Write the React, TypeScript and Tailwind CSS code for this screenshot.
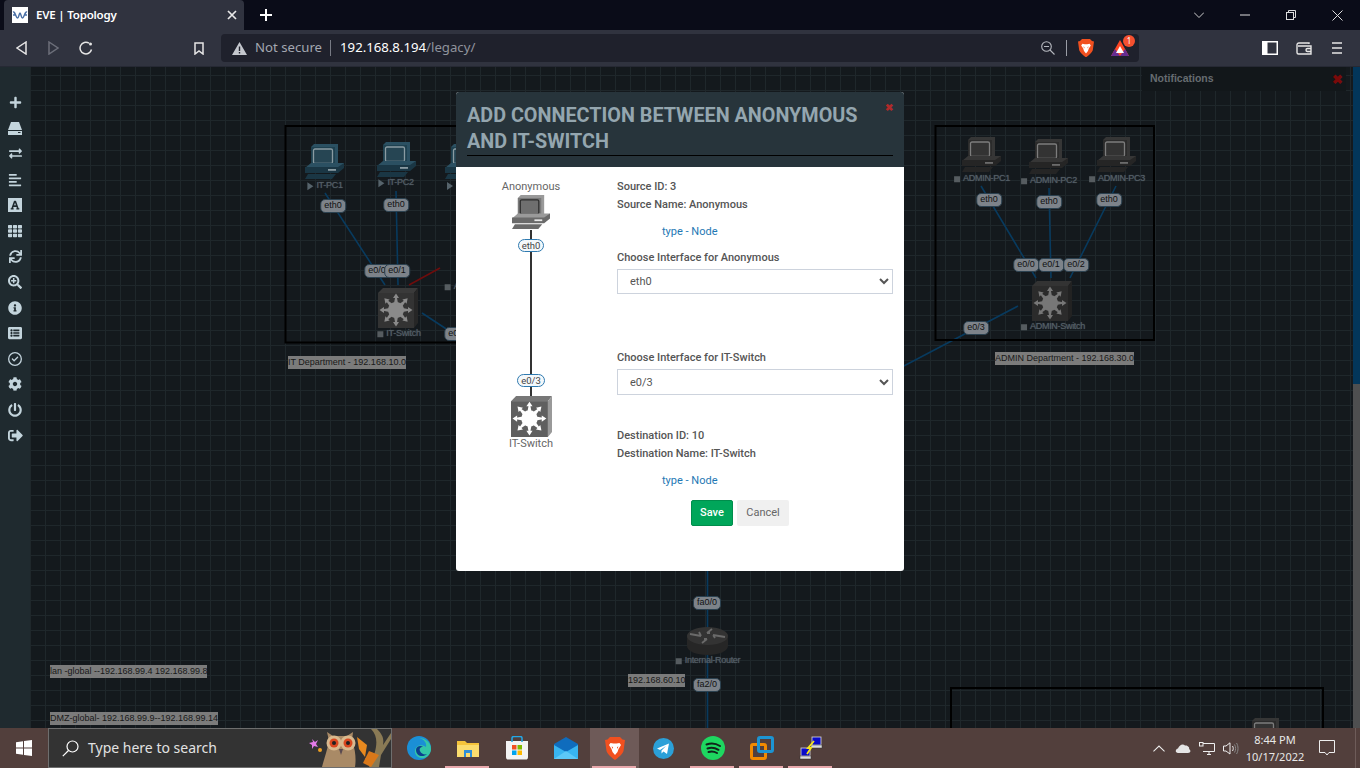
import React from "react";
import {
  FaPlus, FaExchangeAlt, FaAlignLeft, FaFont, FaTh, FaSync, FaSearchPlus, FaInfoCircle, FaListAlt, FaCog, FaPowerOff, FaSignOutAlt,
} from "react-icons/fa";
import { FaRegCircleCheck } from "react-icons/fa6";

const OX = 30, OY = 67;

function Pc({ w = 40, body = "#1f4150", top = "#2b5062", front = "#1a3644", screen = "#264553", rim = "#8a9ba2", slot = "#8a9ba2" }: { w?: number; body?: string; top?: string; front?: string; screen?: string; rim?: string; slot?: string }) {
  return (
    <svg width={w} height={w * 0.9} viewBox="0 0 40 36">
      <path d="M6 3 L9 0 H33 V20 L30 24 H6 Z" fill={top} />
      <rect x="6" y="3" width="24" height="21" fill={body} />
      <rect x="8.5" y="5" width="19" height="14.5" rx="1.5" fill={screen} stroke={rim} strokeWidth="1.3" />
      <path d="M0 24 L6 19 H39 V20 L33 24 Z" fill={top} />
      <path d="M0 23 H33 L39 19 V24 L33 29 H0 Z" fill={front} />
      <rect x="23" y="25" width="8" height="1.8" fill={slot} />
      <path d="M3 30 H31 L27 35 H0 Z" fill={front} />
    </svg>
  );
}

function Sw({ w = 40, top = "#3a3a3a", side = "#262626", face = "#333", star = "#8a8a8a" }: { w?: number; top?: string; side?: string; face?: string; star?: string }) {
  const rays = [0, 45, 90, 135, 180, 225, 270, 315];
  return (
    <svg width={w} height={w} viewBox="0 0 40 40">
      <path d="M0 5 L5 0 H40 L36 5 Z" fill={top} />
      <path d="M36 5 L40 0 V35 L36 40 Z" fill={side} />
      <rect x="0" y="5" width="36" height="35" fill={face} />
      {rays.map((r) => (
        <g key={r} transform={`rotate(${r} 18 22)`}>
          <path d="M15.5 18 L17.2 9 H18.8 L20.5 18 Z" fill={star} />
          <path d="M18 5.5 L21 10 H15 Z" fill={star} />
        </g>
      ))}
      <circle cx="18" cy="22" r="8" fill={star} />
    </svg>
  );
}

function Router() {
  return (
    <svg width="41" height="28" viewBox="0 0 41 28">
      <path d="M0 8 V19 C0 24 9 28 20.5 28 C32 28 41 24 41 19 V8 Z" fill="#262626" />
      <ellipse cx="20.5" cy="9" rx="20.5" ry="9" fill="#333" />
      <path d="M3 7 L14 9 M12 5 L14 9 M38 10 L26 8 M28 11 L26 8 M25 2 L20 6 M23 6 L20 6 M15 16 L20 12 M17 12 L20 12" stroke="#6a6a6a" strokeWidth="1.8" fill="none" />
    </svg>
  );
}

const pills: [string, number, number][] = [
  ["eth0", 333, 206], ["eth0", 396, 205], ["e0/0", 377, 271], ["e0/1", 397, 271], ["e0/3", 457, 334],
  ["eth0", 989, 200], ["eth0", 1049, 202], ["eth0", 1109, 200], ["e0/0", 1026, 265], ["e0/1", 1051, 265], ["e0/2", 1076, 265], ["e0/3", 976, 328],
  ["fa0/0", 707, 603], ["fa2/0", 707, 685],
];

const labels: [string, number, number, number][] = [
  ["IT Department - 192.168.10.0", 288, 356, 118],
  ["ADMIN Department - 192.168.30.0", 995, 352, 139],
  ["192.168.60.10", 628, 674, 57],
  ["lan -global --192.168.99.4 192.168.99.8", 50, 665, 157],
  ["DMZ-global- 192.168.99.9--192.168.99.14", 50, 712, 168],
];

const nodeNames: [string, number, number, boolean][] = [
  ["IT-PC1", 325, 186, true], ["IT-PC2", 396, 183, true], ["", 450, 186, true],
  ["IT-Switch", 399, 334, false], ["A", 452, 287, false],
  ["ADMIN-PC1", 982, 179, false], ["ADMIN-PC2", 1049, 181, false], ["ADMIN-PC3", 1117, 179, false],
  ["ADMIN-Switch", 1053, 327, false], ["Internal-Router", 708, 661, false],
];

const pcsBlue: [number, number][] = [[305, 144], [377, 142], [445, 144]];
const pcsGrey: [number, number][] = [[962, 137], [1029, 139], [1097, 137], [1246, 718]];

function Canvas() {
  return (
    <div className="relative flex-1 overflow-hidden bg-[#14191d] bg-[linear-gradient(#1f272b_1px,transparent_1px),linear-gradient(90deg,#1f272b_1px,transparent_1px)] bg-[size:15px_15px] bg-[position:0px_8px]">
      <svg className="absolute left-0 top-0" width="1330" height="661" viewBox="30 67 1330 661">
        <g stroke="#083a5e" strokeWidth="1.6" fill="none">
          <path d="M325 193 L385 285 M396 191 L398 285 M422 313 L460 338" />
          <path d="M981 186 L1036 278 M1049 188 L1051 278 M1116 186 L1070 278 M1018 306 L900 368" />
          <path d="M707.5 560 V730" />
        </g>
        <path d="M409 285 L440 268" stroke="#6e0c0c" strokeWidth="1.6" />
        <g fill="none" stroke="#000" strokeWidth="2">
          <rect x="285.5" y="126" width="300" height="216.5" />
          <rect x="935.5" y="126" width="218.5" height="214" />
          <rect x="951" y="688" width="372" height="80" />
        </g>
      </svg>
      {pcsBlue.map(([x, y]) => (
        <div key={x} className="absolute" style={{ left: x - OX, top: y - OY }}><Pc /></div>
      ))}
      {pcsGrey.map(([x, y]) => (
        <div key={x} className="absolute" style={{ left: x - OX, top: y - OY }}>
          <Pc body="#2b2b2b" top="#363636" front="#252525" screen="#333" rim="#7d7d7d" slot="#6b6b6b" />
        </div>
      ))}
      <div className="absolute" style={{ left: 378 - OX, top: 288 - OY }}><Sw /></div>
      <div className="absolute" style={{ left: 1032 - OX, top: 281 - OY }}><Sw top="#333" side="#222" face="#2b2b2b" star="#777" /></div>
      <div className="absolute" style={{ left: 687 - OX, top: 627 - OY }}><Router /></div>
      {nodeNames.map(([t, x, y, run]) => (
        <div key={t + x} className="absolute flex -translate-x-1/2 -translate-y-1/2 items-center gap-[3px] whitespace-nowrap text-[9px] tracking-[-0.3px] text-[#525d65] [font-family:'Liberation_Sans',sans-serif] [text-shadow:0_0_1px_#525d65]" style={{ left: x - OX, top: y - OY }}>
          {run ? (
            <span className="h-0 w-0 border-y-[4px] border-l-[6px] border-y-transparent border-l-[#56636b]" />
          ) : (
            <span className="h-[6px] w-[6px] bg-[#565c60]" />
          )}
          {t}
        </div>
      ))}
      {pills.map(([t, x, y]) => (
        <div key={t + x} className="absolute flex h-[14px] -translate-x-1/2 -translate-y-1/2 items-center rounded-[5px] border border-[#2b4150] bg-[#7d838a] px-[3px] text-[9px] text-[#111] [font-family:'Liberation_Sans',sans-serif]" style={{ left: x - OX, top: y - OY }}>
          {t}
        </div>
      ))}
      {labels.map(([t, x, y, w]) => (
        <div key={t} className="absolute h-[13px] overflow-hidden whitespace-nowrap bg-[#7b7b7b] text-[9px] leading-[13px] text-[#181818] [font-family:'Liberation_Sans',sans-serif]" style={{ left: x - OX, top: y - OY, width: w }}>
          {t}
        </div>
      ))}
      <div className="absolute right-[14px] top-0 flex h-[24px] w-[204px] items-center justify-between bg-[#12171a] pl-2 pr-[3px] text-[10.5px] font-bold text-[#666c70] [font-family:'Liberation_Sans',sans-serif]">
        <span>Notifications</span>
        <span className="text-[13px] leading-none text-[#7a0a0a]">✖</span>
      </div>
      <div className="absolute right-0 top-0 flex h-full w-[7px] flex-col">
        <div className="h-[317px] bg-[#03365a]" />
        <div className="flex-1 bg-[#4e4f50]" />
      </div>
    </div>
  );
}

function Pill({ t }: { t: string }) {
  return <div className="flex h-[13px] items-center rounded-full border border-[#2f7ab0] bg-[#f4f8fb] px-[3px] text-[9.5px] leading-none text-[#444]">{t}</div>;
}

function Modal() {
  return (
    <div className="absolute left-[456px] top-[25px] flex h-[479px] w-[448px] flex-col overflow-hidden rounded-[3px] bg-white text-[#555] [font-family:Roboto,'Noto_Sans',sans-serif]">
      <div className="relative h-[75px] bg-[#27343b] px-[11px] pt-[11px]">
        <div className="h-[53px] border-b border-black pb-[1px] text-[19.8px] font-bold leading-[26px] text-[#94a6af]">
          ADD CONNECTION BETWEEN ANONYMOUS
          <br />
          AND IT-SWITCH
        </div>
        <span className="absolute right-[11px] top-[11px] text-[10px] font-bold leading-none text-[#b02a2a]">✖</span>
      </div>
      <div className="flex flex-1">
        <div className="flex h-[285px] w-[150px] flex-col items-center pt-[13px] text-[11px]">
          <div className="leading-[14px] text-[#666]">Anonymous</div>
          <div className="mt-[1px] leading-none">
            <Pc w={39} body="#7a7a7a" top="#9a9a9a" front="#6a6a6a" screen="#6f6f6f" rim="#2f2f2f" slot="#e8e8e8" />
          </div>
          <div className="h-[9px] w-[2px] bg-[#333]" />
          <Pill t="eth0" />
          <div className="h-[122px] w-[2px] bg-[#333]" />
          <Pill t="e0/3" />
          <div className="h-[9px] w-[2px] bg-[#333]" />
          <Sw w={41} top="#777" side="#999" face="#5f5f5f" star="#fff" />
          <div className="text-[11px] leading-[14px] text-[#666]">IT-Switch</div>
        </div>
        <div className="ml-[11px] w-[276px] pt-[12px] text-[11px] font-medium leading-[16px] text-[#555]">
          <div>Source ID: 3</div>
          <div className="mt-[2px]">Source Name: Anonymous</div>
          <div className="ml-[45px] mt-[11px] font-normal text-[#1f78b4]">type - Node</div>
          <div className="mt-[10px]">Choose Interface for Anonymous</div>
          <select defaultValue="eth0" className="mt-[3px] block h-[25px] w-full rounded-none border border-[#cdd3dd] bg-white pl-[8px] text-[11px] font-normal text-[#555]">
            <option>eth0</option>
          </select>
          <div className="mt-[56px]">Choose Interface for IT-Switch</div>
          <select defaultValue="e0/3" className="mt-[3px] block h-[26px] w-full rounded-none border border-[#cdd3dd] bg-white pl-[8px] text-[11px] font-normal text-[#555]">
            <option>e0/3</option>
          </select>
          <div className="mt-[33px]">Destination ID: 10</div>
          <div className="mt-[2px]">Destination Name: IT-Switch</div>
          <div className="ml-[45px] mt-[11px] font-normal text-[#1f78b4]">type - Node</div>
          <div className="ml-[74px] mt-[11px] flex gap-[4px]">
            <div className="flex h-[26px] w-[42px] items-center justify-center rounded-[2px] border border-[#008d4c] bg-[#00a65a] text-white">Save</div>
            <div className="flex h-[26px] w-[52px] items-center justify-center rounded-[2px] bg-[#f0f0f0] font-normal text-[#666]">Cancel</div>
          </div>
        </div>
      </div>
    </div>
  );
}

function BraveLogo({ s = 20 }: { s?: number }) {
  return (
    <svg width={s} height={s * 1.15} viewBox="0 0 20 23">
      <path d="M5 0 H15 L17.5 2.5 L20 3 L18.5 14 C17.5 17 13 21 10 23 C7 21 2.5 17 1.5 14 L0 3 L2.5 2.5 Z" fill="#f1501f" />
      <path d="M5.5 6 L8.5 6.5 H11.5 L14.5 6 L16 8 L13.5 12 L12.5 15 L10 18 L7.5 15 L6.5 12 L4 8 Z M8 10 L6.5 9.5 L8 12 Z M12 10 L13.5 9.5 L12 12 Z" fill="#fff" fillRule="evenodd" />
    </svg>
  );
}

function Chrome() {
  return (
    <>
      <div className="flex h-[30px] items-end bg-[#0a0c18] text-white [font-family:'Noto_Sans',sans-serif]">
        <div className="ml-[4px] flex h-[30px] w-[240px] items-center rounded-t-[4px] bg-[#30333f] pl-[8px]">
          <div className="flex h-[16px] w-[16px] items-center justify-center bg-white">
            <svg width="16" height="10" viewBox="0 0 16 10" fill="none" stroke="#4a6fa5" strokeWidth="1.5"><path d="M1 2 C3 1 4 8 5.5 8 C7 8 7 3 8 3 C9 3 9 8 10.5 8 C12 8 13 1 15 2 M1 5 H4 M12 5 H15" /></svg>
          </div>
          <span className="ml-[8px] text-[11.5px] font-semibold leading-none tracking-[-0.2px]">EVE | Topology</span>
          <svg className="ml-auto mr-[7px]" width="10" height="10" viewBox="0 0 10 10" stroke="#e8e8e8" strokeWidth="1.7"><path d="M1 1 L9 9 M9 1 L1 9" /></svg>
        </div>
        <div className="ml-[16px] flex h-[30px] items-center">
          <svg width="12" height="12" viewBox="0 0 12 12" stroke="#fff" strokeWidth="2"><path d="M6 0 V12 M0 6 H12" /></svg>
        </div>
        <div className="ml-auto flex h-[30px] items-center">
          <svg className="mr-[36px]" width="10" height="6" viewBox="0 0 10 6" fill="none" stroke="#ccc"><path d="M0 0.5 L5 5.5 L10 0.5" /></svg>
          <svg className="mr-[36px]" width="10" height="2" viewBox="0 0 10 2"><path d="M0 1 H10" stroke="#ddd" /></svg>
          <svg className="mr-[36px]" width="10" height="10" viewBox="0 0 10 10" fill="none" stroke="#ddd"><rect x="0.5" y="2.5" width="7" height="7" /><path d="M2.5 2.5 V0.5 H9.5 V7.5 H7.5" /></svg>
          <svg className="mr-[17px]" width="11" height="11" viewBox="0 0 11 11" stroke="#ddd"><path d="M0.5 0.5 L10.5 10.5 M10.5 0.5 L0.5 10.5" /></svg>
        </div>
      </div>
      <div className="flex h-[37px] items-center border-b border-[#262934] bg-[#30333f] [font-family:'Noto_Sans',sans-serif]">
        <svg className="ml-[16px]" width="11" height="14" viewBox="0 0 11 14" fill="none" stroke="#e6e6e6" strokeWidth="1.5"><path d="M10 1 L1 7 L10 13 Z" /></svg>
        <svg className="ml-[21px]" width="11" height="14" viewBox="0 0 11 14" fill="none" stroke="#6c6f7a" strokeWidth="1.5"><path d="M1 1 L10 7 L1 13 Z" /></svg>
        <svg className="ml-[20px]" width="14" height="14" viewBox="0 0 14 14" fill="none" stroke="#e6e6e6" strokeWidth="1.5"><path d="M12.5 8.5 A5.8 5.8 0 1 1 10 2.2" /><circle cx="11.5" cy="3" r="1.5" fill="#e6e6e6" stroke="none" /></svg>
        <svg className="ml-[101px]" width="10" height="13" viewBox="0 0 10 13" fill="none" stroke="#e6e6e6" strokeWidth="1.5"><path d="M1 1 H9 V12 L5 9 L1 12 Z" /></svg>
        <div className="ml-[17px] flex h-[28px] w-[918px] items-center rounded-[4px] bg-[#1f212c] pl-[11px]">
          <svg width="15" height="13" viewBox="0 0 15 13"><path fillRule="evenodd" d="M7.5 0 L15 13 H0 Z M6.8 4.5 H8.2 V9 H6.8 Z M6.8 10 H8.2 V11.4 H6.8 Z" fill="#c4c7cd" /></svg>
          <span className="ml-[8px] text-[13.2px] leading-none text-[#a3a7b0]">Not secure</span>
          <span className="ml-[8px] h-[16px] w-px bg-[#777a84]" />
          <span className="ml-[9px] text-[13.2px] leading-none text-white">192.168.8.194<span className="text-[#8f939c]">/legacy/</span></span>
          <svg className="ml-auto" width="14" height="14" viewBox="0 0 14 14" fill="none" stroke="#b5b8bf" strokeWidth="1.1"><circle cx="5.5" cy="5.5" r="4.8" /><path d="M3 5.5 H8 M9 9 L13.5 13.5" /></svg>
          <span className="ml-[11px] h-[16px] w-px bg-[#9a9da6]" />
          <span className="ml-[11px]"><BraveLogo s={16} /></span>
          <div className="relative ml-[17px] mr-[10px] h-[16px] w-[18px]">
            <svg width="18" height="16" viewBox="0 0 18 16"><path d="M9 0 L18 16 H0 Z" fill="#ff4724" /><path d="M0 16 L4 9 L9 16 L14 9 L18 16 Z" fill="#662d91" /><path d="M9 6 L13 13 H5 Z" fill="#fff" /></svg>
            <span className="absolute -right-[6px] -top-[5px] flex h-[12px] w-[12px] items-center justify-center rounded-full bg-[#f5502f] text-[8px] leading-none text-white">1</span>
          </div>
        </div>
        <svg className="ml-[123px]" width="16" height="14" viewBox="0 0 16 14"><rect x="0.75" y="0.75" width="14.5" height="12.5" fill="none" stroke="#fff" strokeWidth="1.5" /><rect x="1" y="1" width="4.5" height="12" fill="#fff" /></svg>
        <svg className="ml-[18px]" width="16" height="13" viewBox="0 0 16 13" fill="none" stroke="#e6e6e6" strokeWidth="1.4"><path d="M13 2 V1 H3 C1.5 1 1 2 1 3 V10.5 C1 11.5 1.7 12 2.5 12 H15 V4 H2" /><path d="M15 6.5 H11.5 A1.5 1.5 0 0 0 11.5 9.5 H15" /></svg>
        <svg className="ml-[20px]" width="10" height="12" viewBox="0 0 10 12" stroke="#e6e6e6" strokeWidth="1.6"><path d="M0 1 H10 M0 6 H10 M0 11 H10" /></svg>
      </div>
    </>
  );
}

const sideIcons = [
  <FaPlus key="a" size={13} />,
  <svg key="b" width="14" height="13" viewBox="0 0 14 13"><path d="M3 0 H11 L14 8 V13 H0 V8 Z" fill="#c3d4dc" /><path d="M0 8.5 H14" stroke="#1f2a2f" /><rect x="10" y="10" width="2.5" height="1" fill="#1f2a2f" /></svg>,
  <FaExchangeAlt key="c" size={13} />,
  <FaAlignLeft key="d" size={14} />,
  <span key="e" className="flex h-[14px] w-[14px] items-center justify-center bg-[#c3d4dc] text-[#1f2a2f]"><FaFont size={10} /></span>,
  <FaTh key="f" size={14} />,
  <FaSync key="g" size={13} />,
  <FaSearchPlus key="h" size={14} />,
  <FaInfoCircle key="i" size={14} />,
  <FaListAlt key="j" size={14} />,
  <FaRegCircleCheck key="k" size={14} />,
  <FaCog key="l" size={14} />,
  <FaPowerOff key="m" size={14} />,
  <FaSignOutAlt key="n" size={15} />,
];

function Sidebar() {
  return (
    <div className="flex w-[30px] flex-col items-center bg-[#1f2a2f] pt-[23px] text-[#c3d4dc]">
      {sideIcons.map((ic, i) => (
        <div key={i} className="flex h-[25.6px] items-center justify-center">{ic}</div>
      ))}
    </div>
  );
}

function Owl() {
  return (
    <svg width="82" height="38" viewBox="0 0 82 38">
      <path d="M3 10 L6 13 L9 11 L7 15 L9 18 L5 17 L3 20 L3 16 L0 14 L4 13 Z" fill="#e47be8" />
      <circle cx="11" cy="21" r="2" fill="#f0a020" />
      <circle cx="58" cy="31" r="2" fill="#d9c0ee" />
      <path d="M60 38 C66 25 72 10 62 0 H68 C74 6 75 10 74 16 L82 4 V10 L72 26 L70 38 Z" fill="#8a7a55" />
      <path d="M48 8 L58 16 L56 28 L50 20 Z" fill="#e8891f" />
      <path d="M60 22 L70 26 L62 38 L54 34 Z" fill="#d9781a" />
      <path d="M20 12 L18 3 L24 7 H38 L44 3 L43 12 C47 22 47 32 46 38 H13 C15 30 18 22 20 12 Z" fill="#a98a66" />
      <circle cx="25" cy="14" r="7.5" fill="#d9b98e" />
      <circle cx="39" cy="14" r="7.5" fill="#d9b98e" />
      <circle cx="25" cy="14" r="4.5" fill="#d9481f" />
      <circle cx="39" cy="14" r="4.5" fill="#d9481f" />
      <circle cx="25" cy="14" r="2" fill="#222" />
      <circle cx="39" cy="14" r="2" fill="#222" />
      <path d="M30 20 L34 20 L32 26 Z" fill="#5a4a50" />
    </svg>
  );
}

function TaskIcon({ children, active, mark }: { children: React.ReactNode; active?: boolean; mark?: boolean }) {
  return (
    <div className={`relative flex h-10 w-[49px] items-center justify-center ${active ? "bg-[#6e5a58]" : ""}`}>
      {children}
      {mark ? <span className="absolute bottom-0 left-[2px] right-[3px] h-[2px] bg-[#e8a8ac]" /> : null}
    </div>
  );
}

function Taskbar() {
  return (
    <div className="flex h-10 items-center bg-[#523f3c] text-white [font-family:'Noto_Sans',sans-serif]">
      <svg className="ml-[16px]" width="16" height="16" viewBox="0 0 16 16" fill="#fff"><path d="M0 2.2 L7 1.2 V7.5 H0 Z M8 1 L16 0 V7.5 H8 Z M0 8.5 H7 V14.8 L0 13.8 Z M8 8.5 H16 V16 L8 15 Z" /></svg>
      <div className="ml-[16px] flex h-10 w-[344px] items-end overflow-hidden border border-[#6e6e6e] bg-[#333]">
        <div className="flex h-full items-center">
          <svg className="ml-[13px]" width="17" height="17" viewBox="0 0 17 17" fill="none" stroke="#fff" strokeWidth="1.2"><circle cx="10.5" cy="6.5" r="5.5" /><path d="M6.5 10.5 L0.8 16.2" /></svg>
          <span className="ml-[9px] text-[14px] leading-none text-[#e2e2e2]">Type here to search</span>
        </div>
        <div className="ml-auto"><Owl /></div>
      </div>
      <div className="ml-[2px] flex">
        <TaskIcon>
          <svg width="24" height="24" viewBox="0 0 24 24"><circle cx="12" cy="12" r="12" fill="#1b8fd6" /><path d="M24 13 C24 6 18 2 12 2 C17 3 20 7 19 11 C15 8 9 9 8 14 C7 19 12 23 17 22 C21 21 24 17 24 13 Z" fill="#34c6a7" /><path d="M9 14 C9 10 14 9 16 11 C13 11 12 13 13 15 C14 18 18 19 20 18 C16 22 9 20 9 14 Z" fill="#0c3f8f" /></svg>
        </TaskIcon>
        <TaskIcon mark>
          <svg width="22" height="18" viewBox="0 0 22 18"><path d="M0 2 H8 L10 4 H22 V18 H0 Z" fill="#f5c33b" /><path d="M0 6 H22 V18 H0 Z" fill="#fbdc6e" /><rect x="7" y="11" width="8" height="7" fill="#2f8fd8" /><rect x="9" y="14" width="4" height="4" fill="#fbdc6e" /></svg>
        </TaskIcon>
        <TaskIcon>
          <svg width="24" height="24" viewBox="0 0 24 24"><path d="M1 5 H23 V21 C23 23 22 23.5 21 23.5 H3 C2 23.5 1 23 1 21 Z" fill="#f3f3f3" /><path d="M7 6 V2 C7 0.5 8 0.5 9 0.5 H15 C16 0.5 17 0.5 17 2 V6" fill="none" stroke="#23a9e8" strokeWidth="1.5" /><rect x="7" y="9" width="4.5" height="4.5" fill="#f25022" /><rect x="12.5" y="9" width="4.5" height="4.5" fill="#7fba00" /><rect x="7" y="14.5" width="4.5" height="4.5" fill="#00a4ef" /><rect x="12.5" y="14.5" width="4.5" height="4.5" fill="#ffb900" /></svg>
        </TaskIcon>
        <TaskIcon>
          <svg width="24" height="22" viewBox="0 0 24 22"><path d="M12 0 L24 7 V22 H0 V7 Z" fill="#0f6cbd" /><path d="M0 8 L12 15 L24 8 V22 H0 Z" fill="#38b4f0" /><path d="M0 22 L12 14 L24 22 Z" fill="#5cc8f7" /></svg>
        </TaskIcon>
        <TaskIcon active mark><BraveLogo s={20} /></TaskIcon>
        <TaskIcon>
          <svg width="21" height="21" viewBox="0 0 21 21"><circle cx="10.5" cy="10.5" r="10.5" fill="#2ba0d8" /><path d="M4 10.5 L16 5.5 L14 16 L10.5 13.5 L8.5 15.5 L8.5 12.5 L13 8 L7 12 Z" fill="#fff" /></svg>
        </TaskIcon>
        <TaskIcon mark>
          <svg width="24" height="24" viewBox="0 0 24 24"><circle cx="12" cy="12" r="12" fill="#1ed760" /><path d="M5.5 8.5 C10 7 15 7.5 19 10 M6.5 12.5 C10 11.3 14 11.8 17.5 13.8 M7.5 16 C10.5 15.2 13.5 15.6 16 17" stroke="#10231a" strokeWidth="2" strokeLinecap="round" fill="none" /></svg>
        </TaskIcon>
        <TaskIcon mark>
          <svg width="24" height="24" viewBox="0 0 24 24" fill="none" strokeWidth="3"><rect x="1.5" y="8.5" width="14" height="14" rx="1.5" stroke="#f28a00" /><rect x="8.5" y="1.5" width="14" height="14" rx="1.5" stroke="#1c94d2" /></svg>
        </TaskIcon>
        <TaskIcon mark>
          <svg width="24" height="24" viewBox="0 0 24 24"><rect x="13" y="1" width="9" height="8" fill="#0a0ac8" stroke="#ddd" strokeWidth="0.8" /><rect x="12" y="9" width="11" height="3" fill="#ddd" stroke="#333" strokeWidth="0.5" /><rect x="2" y="12" width="9" height="8" fill="#0a0ac8" stroke="#ddd" strokeWidth="0.8" /><rect x="1" y="20" width="11" height="3" fill="#ddd" stroke="#333" strokeWidth="0.5" /><path d="M15 5 L9 12 L12 12 L8 18" stroke="#f7e51b" strokeWidth="1.8" fill="none" /></svg>
        </TaskIcon>
      </div>
      <div className="ml-auto flex h-10 items-center">
        <svg width="12" height="7" viewBox="0 0 13 7" fill="none" stroke="#eee" strokeWidth="1.1"><path d="M0.5 6.5 L6.5 0.8 L12.5 6.5" /></svg>
        <svg className="ml-[10px]" width="16" height="10" viewBox="0 0 16 10"><path d="M3 10 C0 10 0 6 3 5.5 C4 2 8 0 10 2.5 C13 2 15 5 14 6 C16 7 16 10 13 10 Z" fill="#e5e5e5" /></svg>
        <svg className="ml-[8px]" width="16" height="13" viewBox="0 0 16 13" fill="none" stroke="#eee"><path d="M4 1.5 H15.5 V9.5 H4 M8 12.5 H12 M10 9.5 V12.5" /><rect x="0.5" y="0.5" width="3.5" height="3.5" /></svg>
        <svg className="ml-[8px]" width="16" height="13" viewBox="0 0 16 13" fill="none" stroke="#eee"><path d="M0.5 4 H3 L7 0.8 V12 L3 9 H0.5 Z M9.5 4 C10.5 5.5 10.5 7.5 9.5 9" /><path d="M11.5 2.5 C13 5 13 8 11.5 10.5 M13.5 1 C15.5 4 15.5 9 13.5 12" stroke="#888" /></svg>
        <div className="ml-[3px] flex w-[66px] flex-col items-center text-[11px] leading-[17.5px] text-[#e8e8e8]">
          <span>8:44 PM</span>
          <span>10/17/2022</span>
        </div>
        <svg className="ml-[11px]" width="16" height="16" viewBox="0 0 16 16" fill="none" stroke="#eee"><path d="M0.5 0.5 H15.5 V12.5 H10 L8 15 L6 12.5 H0.5 Z" /></svg>
        <div className="ml-[20px] mr-[4px] h-10 w-px bg-[#6e5c59]" />
      </div>
    </div>
  );
}

export default function App() {
  return (
    <div className="flex h-[768px] w-[1360px] flex-col overflow-hidden">
      <Chrome />
      <div className="relative flex min-h-0 flex-1">
        <Sidebar />
        <Canvas />
        <Modal />
      </div>
      <Taskbar />
    </div>
  );
}
